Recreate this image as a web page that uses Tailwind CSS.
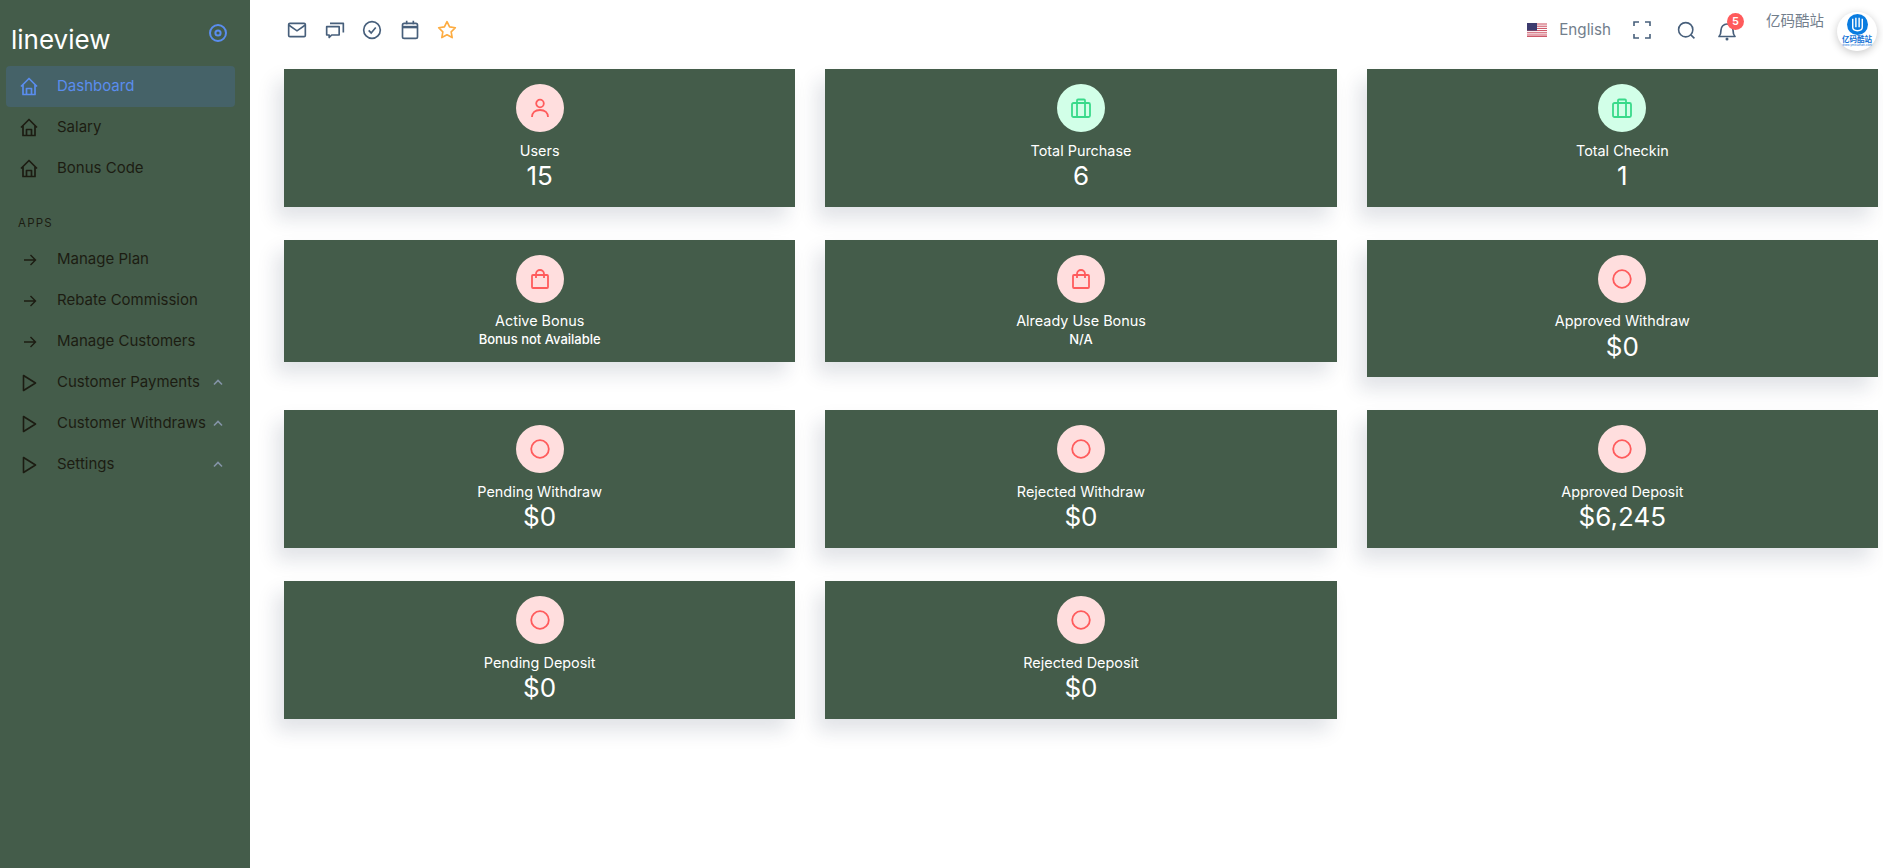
<!DOCTYPE html>
<html lang="en">
<head>
  <meta charset="UTF-8" />
  <title>Dashboard</title>
  <script src="https://cdn.jsdelivr.net/npm/@tailwindcss/browser@4"></script>
</head>
<body class="bg-white h-[868px] overflow-hidden flex font-['Inter','Noto_Sans_CJK_SC',sans-serif] text-[#475f7b]">

  <!-- sidebar -->
  <aside class="w-[250px] h-full shrink-0 bg-[#445c4a] pl-[6px] pr-[15px] text-[15px] text-[#1c1c12]">
    <div class="h-[66px] flex justify-between pl-[5px] pr-[7px]">
      <span class="text-[26px] leading-none text-white mt-[27px]">lineview</span>
      <svg class="mt-[23px]" width="20" height="20" viewBox="0 0 20 20" fill="none" stroke="#5a8dee" stroke-width="2"><circle cx="10" cy="10" r="8"/><circle cx="10" cy="10" r="2.6"/></svg>
    </div>

    <a class="h-[41px] flex items-center rounded bg-[#456268] text-[#5a8dee]">
      <span class="w-[51px] pl-[14px]"><svg width="18" height="19" viewBox="0 0 18 19" fill="none" stroke="currentColor" stroke-width="1.7" stroke-linejoin="round"><path d="M1 9.5 9 1.5l8 8M3 7.5V17.5H15V7.5"/><path d="M6.5 17.5V11.5H11.5V17.5"/></svg></span>
      <span>Dashboard</span>
    </a>
    <a class="h-[41px] flex items-center">
      <span class="w-[51px] pl-[14px]"><svg width="18" height="19" viewBox="0 0 18 19" fill="none" stroke="currentColor" stroke-width="1.7" stroke-linejoin="round"><path d="M1 9.5 9 1.5l8 8M3 7.5V17.5H15V7.5"/><path d="M6.5 17.5V11.5H11.5V17.5"/></svg></span>
      <span>Salary</span>
    </a>
    <a class="h-[41px] flex items-center">
      <span class="w-[51px] pl-[14px]"><svg width="18" height="19" viewBox="0 0 18 19" fill="none" stroke="currentColor" stroke-width="1.7" stroke-linejoin="round"><path d="M1 9.5 9 1.5l8 8M3 7.5V17.5H15V7.5"/><path d="M6.5 17.5V11.5H11.5V17.5"/></svg></span>
      <span>Bonus Code</span>
    </a>

    <div class="h-[50px] pt-[27px] pl-[12px] text-[11.5px] leading-[14px] tracking-[1.2px]">APPS</div>

    <a class="h-[41px] flex items-center">
      <span class="w-[51px] pl-[17px]"><svg width="14" height="14" viewBox="0 0 14 14" fill="none" stroke="currentColor" stroke-width="1.4"><path d="M1 7H12.5M7.5 2l5 5-5 5"/></svg></span>
      <span>Manage Plan</span>
    </a>
    <a class="h-[41px] flex items-center">
      <span class="w-[51px] pl-[17px]"><svg width="14" height="14" viewBox="0 0 14 14" fill="none" stroke="currentColor" stroke-width="1.4"><path d="M1 7H12.5M7.5 2l5 5-5 5"/></svg></span>
      <span>Rebate Commission</span>
    </a>
    <a class="h-[41px] flex items-center">
      <span class="w-[51px] pl-[17px]"><svg width="14" height="14" viewBox="0 0 14 14" fill="none" stroke="currentColor" stroke-width="1.4"><path d="M1 7H12.5M7.5 2l5 5-5 5"/></svg></span>
      <span>Manage Customers</span>
    </a>
    <a class="h-[41px] flex items-center">
      <span class="w-[51px] pl-[16px]"><svg width="15" height="18" viewBox="0 0 15 18" fill="none" stroke="currentColor" stroke-width="1.6" stroke-linejoin="round"><path d="M1.5 1.5 13.5 9 1.5 16.5Z"/></svg></span>
      <span class="flex-1">Customer Payments</span>
      <svg class="mr-[12px]" width="10" height="7" viewBox="0 0 10 7" fill="none" stroke="#8494a7" stroke-width="1.6"><path d="M1 5.5 5 1.5l4 4"/></svg>
    </a>
    <a class="h-[41px] flex items-center">
      <span class="w-[51px] pl-[16px]"><svg width="15" height="18" viewBox="0 0 15 18" fill="none" stroke="currentColor" stroke-width="1.6" stroke-linejoin="round"><path d="M1.5 1.5 13.5 9 1.5 16.5Z"/></svg></span>
      <span class="flex-1">Customer Withdraws</span>
      <svg class="mr-[12px]" width="10" height="7" viewBox="0 0 10 7" fill="none" stroke="#8494a7" stroke-width="1.6"><path d="M1 5.5 5 1.5l4 4"/></svg>
    </a>
    <a class="h-[41px] flex items-center">
      <span class="w-[51px] pl-[16px]"><svg width="15" height="18" viewBox="0 0 15 18" fill="none" stroke="currentColor" stroke-width="1.6" stroke-linejoin="round"><path d="M1.5 1.5 13.5 9 1.5 16.5Z"/></svg></span>
      <span class="flex-1">Settings</span>
      <svg class="mr-[12px]" width="10" height="7" viewBox="0 0 10 7" fill="none" stroke="#8494a7" stroke-width="1.6"><path d="M1 5.5 5 1.5l4 4"/></svg>
    </a>
  </aside>

  <div class="flex-1 min-w-0 pl-[34px] pr-[5px]">
    <!-- top bar -->
    <header class="h-[69.2px] flex items-start">
      <div class="flex items-center gap-[17.5px] h-[60px] pl-[3px]">
        <svg width="20" height="20" viewBox="0 0 24 24" fill="none" stroke="currentColor" stroke-width="2"><rect x="2" y="4" width="20" height="16" rx="1.5"/><path d="m2 6 10 7 10-7"/></svg>
        <svg width="20" height="20" viewBox="0 0 24 24" fill="none" stroke="currentColor" stroke-width="2" stroke-linejoin="round"><path d="M2 8h15v10H8l-3 3v-3H2Z"/><path d="M6 4h16v11"/></svg>
        <svg width="20" height="20" viewBox="0 0 24 24" fill="none" stroke="currentColor" stroke-width="2"><circle cx="12" cy="12" r="10"/><path d="m8 12.5 3 3 5.5-6.5"/></svg>
        <svg width="20" height="20" viewBox="0 0 24 24" fill="none" stroke="currentColor" stroke-width="2"><rect x="3" y="4" width="18" height="18" rx="2"/><path d="M3 8.5h18" stroke-width="3"/><path d="M8 1v4M16 1v4"/></svg>
        <svg width="20" height="20" viewBox="0 0 24 24" fill="none" stroke="#fdac41" stroke-width="2" stroke-linejoin="round"><path d="m12 2 3.1 6.3 6.9 1-5 4.9 1.2 6.9-6.2-3.3-6.2 3.3L7 14.2 2 9.3l6.9-1Z"/></svg>
      </div>

      <div class="ml-auto flex items-start">
        <svg class="mt-[23px]" width="20" height="14" viewBox="0 0 20 14"><rect width="20" height="14" fill="#fff"/><path d="M0 1h20M0 3.2h20M0 5.4h20M0 7.6h20M0 9.8h20M0 12h20M0 13.6h20" stroke="#c9485b" stroke-width="1"/><rect width="10" height="7.6" fill="#3c3b6e"/></svg>
        <span class="ml-[12px] mt-[20px] text-[15.2px] leading-[20px] text-[#727e8c]">English</span>
        <svg class="ml-[22px] mt-[21px]" width="18" height="18" viewBox="0 0 18 18" fill="none" stroke="currentColor" stroke-width="1.6"><path d="M1 5V1h5M12 1h5v4M17 13v4h-5M6 17H1v-4"/></svg>
        <svg class="ml-[26px] mt-[21px]" width="19" height="19" viewBox="0 0 24 24" fill="none" stroke="currentColor" stroke-width="2"><circle cx="11" cy="11" r="9"/><path d="m22 22-4.5-4.5"/></svg>
        <div class="relative ml-[22px] mt-[21px] w-[18px] h-[20px]">
          <svg width="18" height="20" viewBox="0 0 18 20" fill="none" stroke="currentColor" stroke-width="1.7"><path d="M1 15.5c1.5-1.5 2-3 2-6.5a6 6 0 0 1 12 0c0 3.5.5 5 2 6.5Z" stroke-linejoin="round"/><circle cx="9" cy="18" r="1.5" fill="currentColor" stroke="none"/></svg>
          <span class="absolute -top-[8px] left-[9px] w-[17px] h-[17px] rounded-full bg-[#ff5b5c] text-white text-[11px] font-semibold leading-[17px] text-center">5</span>
        </div>
        <span class="ml-[30px] mt-[12px] text-[14.5px] leading-[18px] text-[#727e8c]">亿码酷站</span>
        <div class="ml-[13px] mr-[1px] mt-[12px] w-[40px] h-[39px] rounded-full bg-white shadow-[0_2px_8px_rgba(0,0,0,0.22)] flex flex-col items-center pt-[2px]">
          <svg width="21" height="21" viewBox="0 0 22 22" fill="none"><circle cx="11" cy="11" r="11" fill="#0a7ce0"/><path d="M6 5v9c0 2 2 3.5 5 3.5s5-1.5 5-3.5V5M9.3 4v10M12.7 4v10" stroke="#fff" stroke-width="1.5"/></svg>
          <span class="text-[7.5px] leading-[9px] font-bold text-[#1272d6]">亿码酷站</span>
          <span class="text-[3px] leading-[3px] text-[#1272d6]">www.ymkuzhan.com</span>
        </div>
      </div>
    </header>

    <!-- stat cards -->
    <main class="grid grid-cols-3 gap-x-[30px] gap-y-[33px] items-start text-white text-center">
      <div class="bg-[#445c4a] shadow-[-8px_12px_18px_0_rgba(25,42,70,0.13)] h-[137.6px] pt-[15px]">
        <div class="w-[48px] h-[48px] mx-auto rounded-full bg-[#ffdede] flex items-center justify-center">
          <svg width="20" height="20" viewBox="0 0 20 20" fill="none" stroke="#ff5b5c" stroke-width="1.8"><circle cx="10" cy="5.5" r="3.8"/><path d="M2 19c0-4 3-7 8-7s8 3 8 7"/></svg>
        </div>
        <p class="mt-[9.6px] text-[14.4px] leading-[18.4px]">Users</p>
        <p class="text-[26px] leading-[32px]">15</p>
      </div>
      <div class="bg-[#445c4a] shadow-[-8px_12px_18px_0_rgba(25,42,70,0.13)] h-[137.6px] pt-[15px]">
        <div class="w-[48px] h-[48px] mx-auto rounded-full bg-[#d2ffe8] flex items-center justify-center">
          <svg width="20" height="20" viewBox="0 0 20 20" fill="none" stroke="#39da8a" stroke-width="1.8" stroke-linejoin="round"><rect x="1" y="5" width="18" height="14" rx="1.5"/><path d="M6 19V2.5q0-1 1-1h6q1 0 1 1V19"/></svg>
        </div>
        <p class="mt-[9.6px] text-[14.4px] leading-[18.4px]">Total Purchase</p>
        <p class="text-[26px] leading-[32px]">6</p>
      </div>
      <div class="bg-[#445c4a] shadow-[-8px_12px_18px_0_rgba(25,42,70,0.13)] h-[137.6px] pt-[15px]">
        <div class="w-[48px] h-[48px] mx-auto rounded-full bg-[#d2ffe8] flex items-center justify-center">
          <svg width="20" height="20" viewBox="0 0 20 20" fill="none" stroke="#39da8a" stroke-width="1.8" stroke-linejoin="round"><rect x="1" y="5" width="18" height="14" rx="1.5"/><path d="M6 19V2.5q0-1 1-1h6q1 0 1 1V19"/></svg>
        </div>
        <p class="mt-[9.6px] text-[14.4px] leading-[18.4px]">Total Checkin</p>
        <p class="text-[26px] leading-[32px]">1</p>
      </div>

      <div class="bg-[#445c4a] shadow-[-8px_12px_18px_0_rgba(25,42,70,0.13)] h-[122px] pt-[15px]">
        <div class="w-[48px] h-[48px] mx-auto rounded-full bg-[#ffdede] flex items-center justify-center">
          <svg width="18" height="20" viewBox="0 0 18 20" fill="none" stroke="#ff5b5c" stroke-width="1.8" stroke-linejoin="round"><rect x="1" y="6" width="16" height="13" rx="1"/><path d="M5 9V5a4 4 0 0 1 8 0v4"/></svg>
        </div>
        <p class="mt-[9.6px] text-[14.4px] leading-[18.4px]">Active Bonus</p>
        <p class="text-[13px] leading-[16px] font-medium">Bonus not Available</p>
      </div>
      <div class="bg-[#445c4a] shadow-[-8px_12px_18px_0_rgba(25,42,70,0.13)] h-[122px] pt-[15px]">
        <div class="w-[48px] h-[48px] mx-auto rounded-full bg-[#ffdede] flex items-center justify-center">
          <svg width="18" height="20" viewBox="0 0 18 20" fill="none" stroke="#ff5b5c" stroke-width="1.8" stroke-linejoin="round"><rect x="1" y="6" width="16" height="13" rx="1"/><path d="M5 9V5a4 4 0 0 1 8 0v4"/></svg>
        </div>
        <p class="mt-[9.6px] text-[14.4px] leading-[18.4px]">Already Use Bonus</p>
        <p class="text-[13px] leading-[16px] font-medium">N/A</p>
      </div>
      <div class="bg-[#445c4a] shadow-[-8px_12px_18px_0_rgba(25,42,70,0.13)] h-[137.6px] pt-[15px]">
        <div class="w-[48px] h-[48px] mx-auto rounded-full bg-[#ffdede] flex items-center justify-center">
          <svg width="20" height="20" viewBox="0 0 20 20" fill="none" stroke="#ff5b5c" stroke-width="1.8"><circle cx="10" cy="10" r="8.8"/></svg>
        </div>
        <p class="mt-[9.6px] text-[14.4px] leading-[18.4px]">Approved Withdraw</p>
        <p class="text-[26px] leading-[32px]">$0</p>
      </div>

      <div class="bg-[#445c4a] shadow-[-8px_12px_18px_0_rgba(25,42,70,0.13)] h-[137.6px] pt-[15px]">
        <div class="w-[48px] h-[48px] mx-auto rounded-full bg-[#ffdede] flex items-center justify-center">
          <svg width="20" height="20" viewBox="0 0 20 20" fill="none" stroke="#ff5b5c" stroke-width="1.8"><circle cx="10" cy="10" r="8.8"/></svg>
        </div>
        <p class="mt-[9.6px] text-[14.4px] leading-[18.4px]">Pending Withdraw</p>
        <p class="text-[26px] leading-[32px]">$0</p>
      </div>
      <div class="bg-[#445c4a] shadow-[-8px_12px_18px_0_rgba(25,42,70,0.13)] h-[137.6px] pt-[15px]">
        <div class="w-[48px] h-[48px] mx-auto rounded-full bg-[#ffdede] flex items-center justify-center">
          <svg width="20" height="20" viewBox="0 0 20 20" fill="none" stroke="#ff5b5c" stroke-width="1.8"><circle cx="10" cy="10" r="8.8"/></svg>
        </div>
        <p class="mt-[9.6px] text-[14.4px] leading-[18.4px]">Rejected Withdraw</p>
        <p class="text-[26px] leading-[32px]">$0</p>
      </div>
      <div class="bg-[#445c4a] shadow-[-8px_12px_18px_0_rgba(25,42,70,0.13)] h-[137.6px] pt-[15px]">
        <div class="w-[48px] h-[48px] mx-auto rounded-full bg-[#ffdede] flex items-center justify-center">
          <svg width="20" height="20" viewBox="0 0 20 20" fill="none" stroke="#ff5b5c" stroke-width="1.8"><circle cx="10" cy="10" r="8.8"/></svg>
        </div>
        <p class="mt-[9.6px] text-[14.4px] leading-[18.4px]">Approved Deposit</p>
        <p class="text-[26px] leading-[32px]">$6,245</p>
      </div>

      <div class="bg-[#445c4a] shadow-[-8px_12px_18px_0_rgba(25,42,70,0.13)] h-[137.6px] pt-[15px]">
        <div class="w-[48px] h-[48px] mx-auto rounded-full bg-[#ffdede] flex items-center justify-center">
          <svg width="20" height="20" viewBox="0 0 20 20" fill="none" stroke="#ff5b5c" stroke-width="1.8"><circle cx="10" cy="10" r="8.8"/></svg>
        </div>
        <p class="mt-[9.6px] text-[14.4px] leading-[18.4px]">Pending Deposit</p>
        <p class="text-[26px] leading-[32px]">$0</p>
      </div>
      <div class="bg-[#445c4a] shadow-[-8px_12px_18px_0_rgba(25,42,70,0.13)] h-[137.6px] pt-[15px]">
        <div class="w-[48px] h-[48px] mx-auto rounded-full bg-[#ffdede] flex items-center justify-center">
          <svg width="20" height="20" viewBox="0 0 20 20" fill="none" stroke="#ff5b5c" stroke-width="1.8"><circle cx="10" cy="10" r="8.8"/></svg>
        </div>
        <p class="mt-[9.6px] text-[14.4px] leading-[18.4px]">Rejected Deposit</p>
        <p class="text-[26px] leading-[32px]">$0</p>
      </div>
    </main>
  </div>
</body>
</html>
